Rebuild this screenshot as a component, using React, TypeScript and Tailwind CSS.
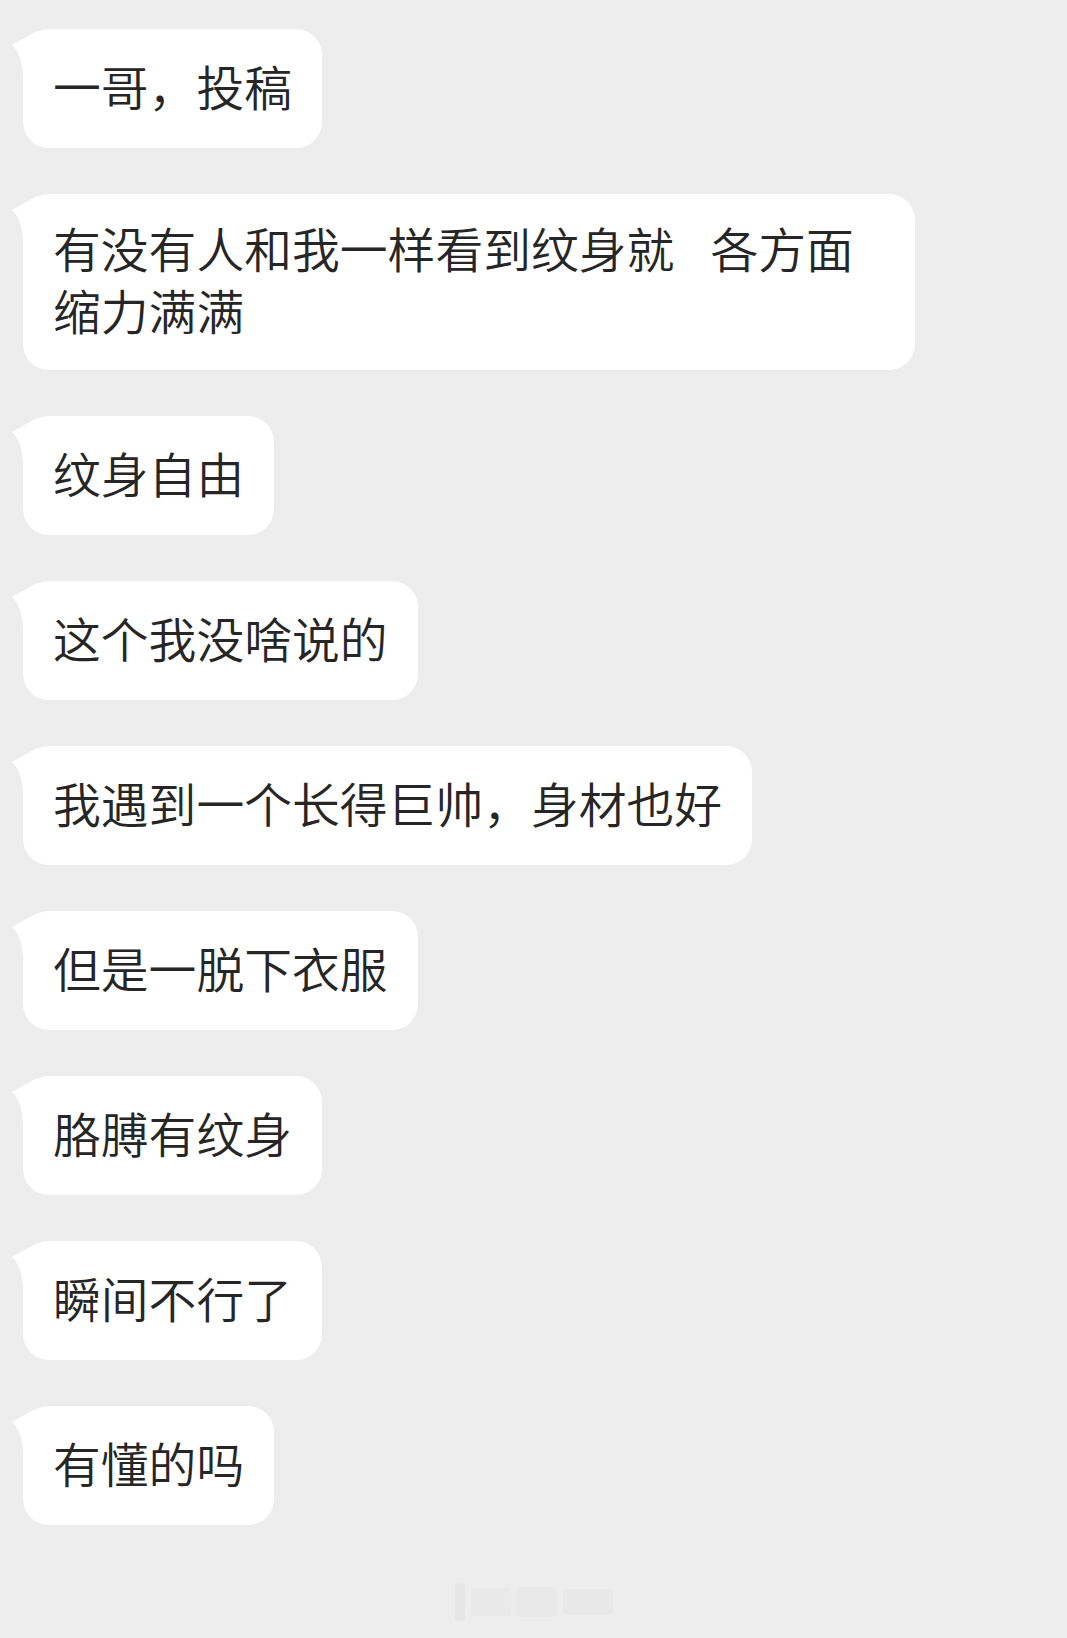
const messages: string[] = [
  "一哥，投稿",
  "有没有人和我一样看到纹身就|各方面缩力满满",
  "纹身自由",
  "这个我没啥说的",
  "我遇到一个长得巨帅，身材也好",
  "但是一脱下衣服",
  "胳膊有纹身",
  "瞬间不行了",
  "有懂的吗",
];

function Tail() {
  return (
    <svg
      className="absolute left-[-12px] top-0"
      width="26"
      height="50"
      viewBox="0 0 26 50"
    >
      <path d="M1 16 L26 2 L26 50 L12 50 C12 36 9 23 1 16 Z" fill="#ffffff" />
    </svg>
  );
}

function Bubble({ text }: { text: string }) {
  const parts = text.split("|");
  const multi = parts.length > 1;
  return (
    <div
      className={
        "relative w-fit max-w-[892px] rounded-[26px] bg-white px-[30px] text-[47.8px] font-[350] leading-[62px] text-[#262626] " +
        (multi ? "pt-[23px] pb-[29px]" : "pt-[26px] pb-[31px]")
      }
    >
      <Tail />
      <p className="relative">
        {parts[0]}
        {multi && <span className="ml-[36px]">{parts[1]}</span>}
      </p>
    </div>
  );
}

export default function App() {
  return (
    <div
      className="min-h-[1638px] w-full bg-[#ededed] pl-[23px] pt-[29px]"
      style={{ fontFamily: '"Noto Sans CJK SC", "Noto Sans", sans-serif' }}
    >
      <div className="flex flex-col gap-[46px]">
        {messages.map((m, i) => (
          <Bubble key={i} text={m} />
        ))}
      </div>
      {/* faint watermark */}
      <div className="mt-[58px] flex items-center justify-center gap-[6px] pr-[23px] opacity-60">
        <div className="h-[38px] w-[10px] rounded-sm bg-[#e2e2e2]" />
        <div className="h-[28px] w-[40px] rounded-sm bg-[#e8e8e8]" />
        <div className="h-[30px] w-[40px] rounded-sm bg-[#e8e8e8]" />
        <div className="h-[26px] w-[50px] rounded-sm bg-[#e6e6e6]" />
      </div>
    </div>
  );
}
